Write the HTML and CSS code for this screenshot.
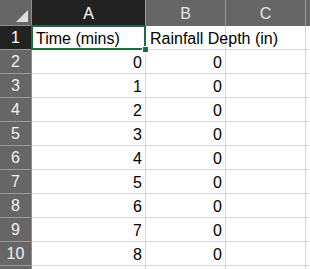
FILE: index.html
```html
<!DOCTYPE html>
<html lang="en">
<head>
    <meta charset="UTF-8">
    <meta name="viewport" content="width=device-width, initial-scale=1.0">
    <link rel="stylesheet" href="styles.css">
    <title>Sheet</title>
</head>
<body>
    <div class="sheet">
        <div class="corner"><span class="tri"></span></div>
        <div class="col-head active">A</div>
        <div class="col-head">B</div>
        <div class="col-head">C</div>
        <div class="col-head rest"></div>

        <div class="row-head active">1</div>
        <div class="cell sel">Time (mins)<span class="sel-box"><span class="handle"></span></span></div>
        <div class="cell text">Rainfall Depth (in)</div>
        <div class="cell"></div>
        <div class="cell rest"></div>

        <div class="row-head">2</div><div class="cell num">0</div><div class="cell num">0</div><div class="cell"></div><div class="cell rest"></div>
        <div class="row-head">3</div><div class="cell num">1</div><div class="cell num">0</div><div class="cell"></div><div class="cell rest"></div>
        <div class="row-head">4</div><div class="cell num">2</div><div class="cell num">0</div><div class="cell"></div><div class="cell rest"></div>
        <div class="row-head">5</div><div class="cell num">3</div><div class="cell num">0</div><div class="cell"></div><div class="cell rest"></div>
        <div class="row-head">6</div><div class="cell num">4</div><div class="cell num">0</div><div class="cell"></div><div class="cell rest"></div>
        <div class="row-head">7</div><div class="cell num">5</div><div class="cell num">0</div><div class="cell"></div><div class="cell rest"></div>
        <div class="row-head">8</div><div class="cell num">6</div><div class="cell num">0</div><div class="cell"></div><div class="cell rest"></div>
        <div class="row-head">9</div><div class="cell num">7</div><div class="cell num">0</div><div class="cell"></div><div class="cell rest"></div>
        <div class="row-head">10</div><div class="cell num">8</div><div class="cell num">0</div><div class="cell"></div><div class="cell rest"></div>

        <div class="row-head"></div><div class="cell"></div><div class="cell"></div><div class="cell"></div><div class="cell rest"></div>
    </div>
</body>
</html>
```

FILE: styles.css
```css
body {
    margin: 0;
    padding: 0;
    background-color: #ffffff;
    font-family: 'Liberation Sans', Arial, sans-serif;
    overflow: hidden;
}

.sheet {
    display: grid;
    grid-template-columns: 32px 114px 80px 80px 1fr;
    grid-template-rows: 26px repeat(10, 24px) 24px;
    width: 310px;
    height: 269px;
    overflow: hidden;
}

.corner {
    background-color: #666666;
    border-right: 1px solid #8c8c8c;
    border-bottom: 1px solid #8c8c8c;
    box-sizing: border-box;
    position: relative;
}

.tri {
    position: absolute;
    right: 3px;
    bottom: 3px;
    width: 0;
    height: 0;
    border-left: 12px solid transparent;
    border-bottom: 12px solid #dedede;
}

.col-head {
    background-color: #666666;
    color: #e6e6e6;
    font-size: 16px;
    display: flex;
    align-items: center;
    justify-content: center;
    border-right: 1px solid #9a9a9a;
    box-sizing: border-box;
    padding-top: 2px;
}

.col-head.rest {
    border-right: none;
}

.row-head {
    background-color: #666666;
    color: #f2f2f2;
    font-size: 16px;
    display: flex;
    align-items: center;
    justify-content: center;
    border-bottom: 1px solid #9a9a9a;
    border-right: 1px solid #8c8c8c;
    box-sizing: border-box;
    padding-top: 1px;
}

.col-head.active,
.row-head.active {
    background-color: #222222;
    color: #ffffff;
}

.cell {
    border-right: 1px solid #d4d4d4;
    border-bottom: 1px solid #d4d4d4;
    box-sizing: border-box;
    font-size: 16px;
    color: #000000;
    display: flex;
    align-items: center;
    padding: 2px 3px 0 4px;
    white-space: nowrap;
}

.cell.rest {
    border-right: none;
}

.cell.num {
    justify-content: flex-end;
}

.cell.text {
    overflow: visible;
}

.cell.sel {
    position: relative;
}

.sel-box {
    position: absolute;
    left: -1px;
    top: -1px;
    right: -1px;
    bottom: -1px;
    border: 2px solid #1d6b3e;
    z-index: 2;
}

.handle {
    position: absolute;
    right: -5px;
    bottom: -5px;
    width: 5px;
    height: 5px;
    background-color: #1d6b3e;
    border: 1px solid #ffffff;
}
```
